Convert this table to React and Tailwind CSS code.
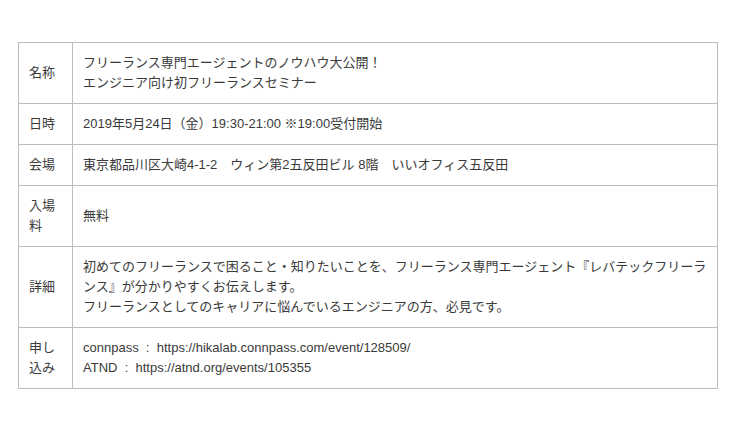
const rows = [
    {
        label: "名称",
        lines: [
            "フリーランス専門エージェントのノウハウ大公開！",
            "エンジニア向け初フリーランスセミナー",
        ],
    },
    {
        label: "日時",
        lines: ["2019年5月24日（金）19:30-21:00 ※19:00受付開始"],
    },
    {
        label: "会場",
        lines: ["東京都品川区大崎4-1-2　ウィン第2五反田ビル 8階　いいオフィス五反田"],
    },
    {
        label: "入場料",
        lines: ["無料"],
    },
    {
        label: "詳細",
        lines: [
            "初めてのフリーランスで困ること・知りたいことを、フリーランス専門エージェント『レバテックフリーラ",
            "ンス』が分かりやすくお伝えします。",
            "フリーランスとしてのキャリアに悩んでいるエンジニアの方、必見です。",
        ],
    },
    {
        label: "申し込み",
        lines: [
            "connpass\u00a0 : \u00a0https://hikalab.connpass.com/event/128509/",
            "ATND\u00a0 : \u00a0https://atnd.org/events/105355",
        ],
    },
];

export default function App() {
    return (
        <div
            className="w-[740px] h-[429px] bg-white pt-[42px] pl-[18px] text-[13px] leading-[20px] text-[#3a3a3a]"
            style={{ fontFamily: '"Liberation Sans", "Noto Sans CJK JP", sans-serif' }}
        >
            <table className="w-[700px] table-fixed border-collapse">
                <colgroup>
                    <col className="w-[54px]" />
                    <col />
                </colgroup>
                <tbody>
                    {rows.map((row) => (
                        <tr key={row.label}>
                            <td className="border border-[#bdbdbd] px-[10px] py-[10px] align-middle">
                                {row.label}
                            </td>
                            <td className="border border-[#bdbdbd] pl-[10px] pr-0 py-[10px] align-middle">
                                {row.lines.map((line) => (
                                    <div key={line} className="whitespace-nowrap">
                                        {line}
                                    </div>
                                ))}
                            </td>
                        </tr>
                    ))}
                </tbody>
            </table>
        </div>
    );
}
